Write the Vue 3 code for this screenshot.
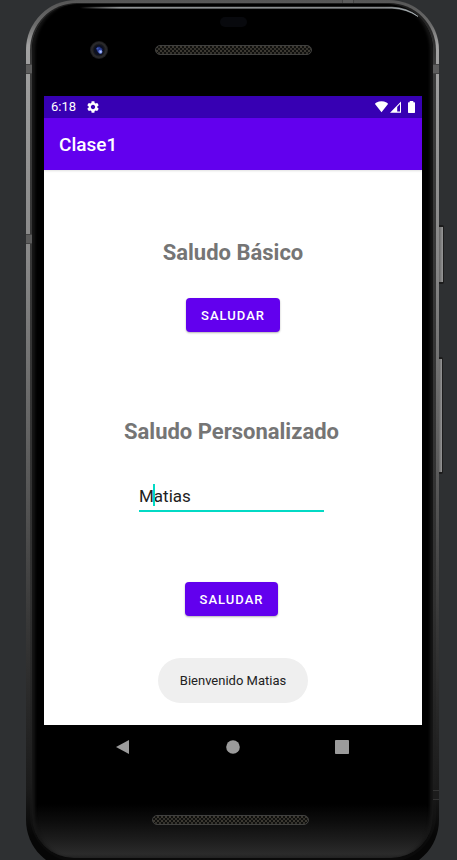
<script setup>
import { ref } from 'vue'

const name = ref('Matias')
const message = ref('Bienvenido Matias')

function greet() {
  message.value = 'Bienvenido'
}

function greetByName() {
  message.value = `Bienvenido ${name.value}`
}
</script>

<template>
  <div class="desk">
    <div class="phone">
      <span class="key power"></span>
      <span class="key volume"></span>
      <div class="rim">
        <div class="glass">
          <svg class="shine" viewBox="0 0 401 50" preserveAspectRatio="none" aria-hidden="true">
            <defs>
              <linearGradient id="shine" x1="0" x2="1" y1="0" y2="0">
                <stop offset="0" stop-color="#999" stop-opacity="0" />
                <stop offset="0.12" stop-color="#a4a8aa" />
                <stop offset="0.9" stop-color="#9a9ea0" />
                <stop offset="1" stop-color="#b4bcc0" />
              </linearGradient>
            </defs>
            <path d="M48 3.2H360Q375 3.5 386 12.5Q375 5 360 4.2H48Z" fill="url(#shine)" stroke="url(#shine)" stroke-width="0.6" />
          </svg>
          <header class="top">
            <span class="sensor"></span>
            <div class="top-row">
              <svg class="camera" viewBox="0 0 18 18" aria-hidden="true">
                <circle cx="9" cy="9" r="9" fill="#1d1d1f" />
                <circle cx="9" cy="9" r="7.2" fill="none" stroke="#2b2b2d" stroke-width="1.6" />
                <circle cx="9" cy="9" r="5.2" fill="#0c1022" />
                <path d="M6 7.5 9 5.5l3.4 2.4-1 4.6-3.6-1.2z" fill="#24378c" />
                <circle cx="7.6" cy="7.4" r="1" fill="#4a60b8" />
                <circle cx="10.4" cy="10.7" r="2" fill="#6f88e2" />
                <circle cx="10.7" cy="10.8" r="0.9" fill="#c4d0ff" />
              </svg>
              <span class="speaker"></span>
            </div>
          </header>

          <main class="screen">
            <div class="status">
              <time>6:18</time>
              <svg class="gear" viewBox="2 2 20 20" aria-hidden="true">
                <path fill="#fff" fill-rule="evenodd" d="M19.14 12.94c.04-.3.06-.61.06-.94 0-.32-.02-.64-.07-.94l2.03-1.58c.18-.14.23-.41.12-.61l-1.92-3.32c-.12-.22-.37-.29-.59-.22l-2.39.96c-.5-.38-1.03-.7-1.62-.94l-.36-2.54c-.04-.24-.24-.41-.48-.41h-3.84c-.24 0-.43.17-.47.41l-.36 2.54c-.59.24-1.13.57-1.62.94l-2.39-.96c-.22-.08-.47 0-.59.22L2.74 8.87c-.12.21-.08.47.12.61l2.03 1.58c-.05.3-.09.63-.09.94s.02.64.07.94l-2.03 1.58c-.18.14-.23.41-.12.61l1.92 3.32c.12.22.37.29.59.22l2.39-.96c.5.38 1.03.7 1.62.94l.36 2.54c.05.24.24.41.48.41h3.84c.24 0 .44-.17.47-.41l.36-2.54c.59-.24 1.13-.56 1.62-.94l2.39.96c.22.08.47 0 .59-.22l1.92-3.32c.12-.22.07-.47-.12-.61l-2.01-1.58zM12 15.6c-1.98 0-3.6-1.62-3.6-3.6s1.62-3.6 3.6-3.6 3.6 1.62 3.6 3.6-1.62 3.6-3.6 3.6z" />
              </svg>
              <svg class="signals" viewBox="0 0 41 12" aria-hidden="true">
                <path fill="#fff" d="M0 3Q0 2 1.5 1.4Q6.5-1 11.5 1.4Q13 2 13 3L6.5 11.2Z" />
                <path fill="#fff" fill-rule="evenodd" d="M15 11.8 26 .5V11.8ZM22.2 6V10.4H25V3Z" />
                <path fill="#fff" d="M34.7 0H38.3V1.2H39.4Q40 1.2 40 1.9V11.3Q40 12 39.4 12H33.6Q33 12 33 11.3V1.9Q33 1.2 33.6 1.2H34.7Z" />
              </svg>
            </div>
            <div class="appbar">
              <h1>Clase1</h1>
            </div>

            <div class="content">
              <section class="basic">
                <h2>Saludo Básico</h2>
                <button type="button" @click="greet">SALUDAR</button>
              </section>
              <form class="custom" @submit.prevent="greetByName">
                <h2><label for="name">Saludo Personalizado</label></h2>
                <div class="field">
                  <input id="name" v-model="name" type="text" autocomplete="off" spellcheck="false" />
                  <span class="caret"></span>
                </div>
                <button type="submit">SALUDAR</button>
              </form>
              <p class="toast" role="status">{{ message }}</p>
            </div>
          </main>

          <nav class="nav">
            <button type="button" aria-label="Atrás">
              <svg viewBox="0 0 14 14"><path d="M13 0V14L0 7Z" fill="#9b9b9b" /></svg>
            </button>
            <button type="button" aria-label="Inicio">
              <svg viewBox="0 0 14 14"><circle cx="7" cy="7" r="6.8" fill="#9b9b9b" /></svg>
            </button>
            <button type="button" aria-label="Recientes">
              <svg viewBox="0 0 14 14"><rect width="14" height="14" rx="0.8" fill="#9b9b9b" /></svg>
            </button>
          </nav>
          <footer class="chin">
            <span class="speaker"></span>
          </footer>
        </div>
      </div>
      <span class="band left-high"></span>
      <span class="band left-mid"></span>
      <span class="band right-high"></span>
      <span class="band right-low"></span>
      <span class="band top-band"></span>
    </div>
  </div>
</template>

<style>
body {
  margin: 0;
  background: #2e3032;
}
</style>

<style scoped>
* {
  box-sizing: border-box;
}

.desk {
  min-height: 100vh;
  padding: 0 18px 0 26px;
  overflow: hidden;
  background: #2e3032;
  font-family: Roboto, "Liberation Sans", sans-serif;
}

.phone {
  position: relative;
  margin-bottom: -10px;
  padding: 3px 3px 8px 4px;
  border-radius: 50px;
  background: linear-gradient(
    #555 0,
    #6c6c6c 25px,
    #a2a2a2 45px,
    #909090 180px,
    #888 260px,
    #6a6a6a 400px,
    #505050 520px,
    #383838 620px,
    #262626 720px,
    #1a1a1a 790px,
    #060606 835px
  );
}

.rim {
  padding: 1px 3px 4px 2px;
  border-radius: 47px;
  background: linear-gradient(#1c1c1c, #3a3a3a 60px, #303030 600px, #1c1c1c 780px, #0a0a0a 840px);
}

.glass {
  position: relative;
  border-radius: 46px 46px 42px 42px;
  background: linear-gradient(#000 800px, #0d0d0d 818px, #1c1c1c 835px, #2b2b2b 850px, #222);
  box-shadow: inset 6px 0 3px -3px #161616, inset -6px 0 3px -3px #161616;
}

.shine {
  position: absolute;
  top: 0;
  left: 0;
  width: 100%;
  height: 50px;
}

.top {
  display: flex;
  flex-direction: column;
  align-items: center;
  height: 92px;
  padding: 13px 11px 0 12px;
}

.sensor {
  width: 27px;
  height: 10px;
  border-radius: 5px;
  background: #08090d;
}

.top-row {
  display: grid;
  grid-template-columns: 1fr auto 1fr;
  align-items: center;
  width: 100%;
  margin-top: 14px;
}

.camera {
  justify-self: center;
  width: 18px;
  height: 18px;
}

.speaker {
  width: 157px;
  height: 10px;
  border: 1px solid #40403f;
  border-radius: 5px;
  background:
    radial-gradient(circle at 1px 1px, #3c3932 1px, transparent 1px) 0 0 / 4px 4px,
    radial-gradient(circle at 3px 3px, #35332d 1px, transparent 1px) 0 0 / 4px 4px,
    #10100e;
}

.screen {
  margin: 0 11px 0 12px;
  background: #fff;
}

.status {
  display: flex;
  align-items: center;
  height: 22px;
  padding: 0 6px 0 7px;
  background: #3700b3;
  color: #fff;
  font-size: 13px;
  line-height: 24px;
}

.gear {
  width: 12px;
  height: 12px;
  margin-left: 11px;
}

.signals {
  width: 41px;
  height: 12px;
  margin-left: auto;
}

.appbar {
  display: flex;
  align-items: center;
  height: 52px;
  padding: 2px 15px 0;
  background: #6200ee;
  box-shadow: 0 1px 2px rgba(0, 0, 0, 0.12);
  color: #fff;
}

h1 {
  margin: 0;
  font-size: 19px;
  font-weight: 500;
  line-height: 24px;
}

.content,
.basic,
.custom {
  display: flex;
  flex-direction: column;
  align-items: center;
}

.content {
  padding: 69px 0 22px;
}

.custom {
  margin-top: 86px;
  padding-right: 3px;
}

h2 {
  margin: 0;
  color: #757575;
  font-size: 22px;
  font-weight: 700;
  line-height: 28px;
}

.basic button,
.custom button {
  height: 34px;
  padding: 0 15px;
  border: 0;
  border-radius: 4px;
  background: #6200ee;
  box-shadow: 0 1px 2px rgba(0, 0, 0, 0.3);
  color: #fff;
  font-family: inherit;
  font-size: 13px;
  font-weight: 500;
  letter-spacing: 1px;
}

.basic button {
  margin-top: 31px;
}

.custom button {
  margin-top: 70px;
}

.field {
  position: relative;
  width: 185px;
  margin-top: 38px;
}

.field input {
  display: block;
  width: 100%;
  height: 28px;
  padding: 0 0 2px;
  border: 0;
  border-bottom: 2px solid #03dac5;
  border-radius: 0;
  outline: 0;
  background: transparent;
  color: #212121;
  font-family: inherit;
  font-size: 17px;
}

.caret {
  position: absolute;
  top: 0;
  left: 14px;
  width: 2px;
  height: 22px;
  background: #03dac5;
}

.toast {
  margin: 42px 0 0;
  padding: 0 22px;
  border-radius: 23px;
  background: #efefef;
  color: #212121;
  font-size: 13px;
  line-height: 45px;
}

.nav {
  display: flex;
  justify-content: space-between;
  align-items: center;
  height: 44px;
  margin: 0 11px 0 12px;
  padding: 0 73px 0 72px;
}

.nav button {
  display: flex;
  padding: 0;
  border: 0;
  background: none;
}

.nav svg {
  width: 14px;
  height: 14px;
}

.chin {
  display: flex;
  justify-content: center;
  height: 89px;
  padding: 46px 4px 0 0;
}

.key {
  position: absolute;
  left: 100%;
  border: solid #1c1c1c;
  border-width: 2px 1px 2px 0;
  border-radius: 0 2px 2px 0;
  background: linear-gradient(90deg, #666, #999);
}

.power {
  top: 225px;
  width: 5px;
  height: 59px;
}

.volume {
  top: 357px;
  width: 4px;
  height: 117px;
}

.band {
  position: absolute;
  width: 6px;
  height: 10px;
  border: solid #444;
  border-width: 1px 0;
  background: #5c5c5c;
}

.left-high {
  top: 64px;
  left: 0;
}

.left-mid {
  top: 234px;
  left: 0;
}

.right-high {
  top: 64px;
  right: 0;
}

.right-low {
  top: 790px;
  right: 0;
  border-color: #333;
  background: #1c1c1c;
}

.top-band {
  top: 0;
  right: 85px;
  width: 12px;
  height: 3px;
  border-width: 0 1px;
}
</style>
